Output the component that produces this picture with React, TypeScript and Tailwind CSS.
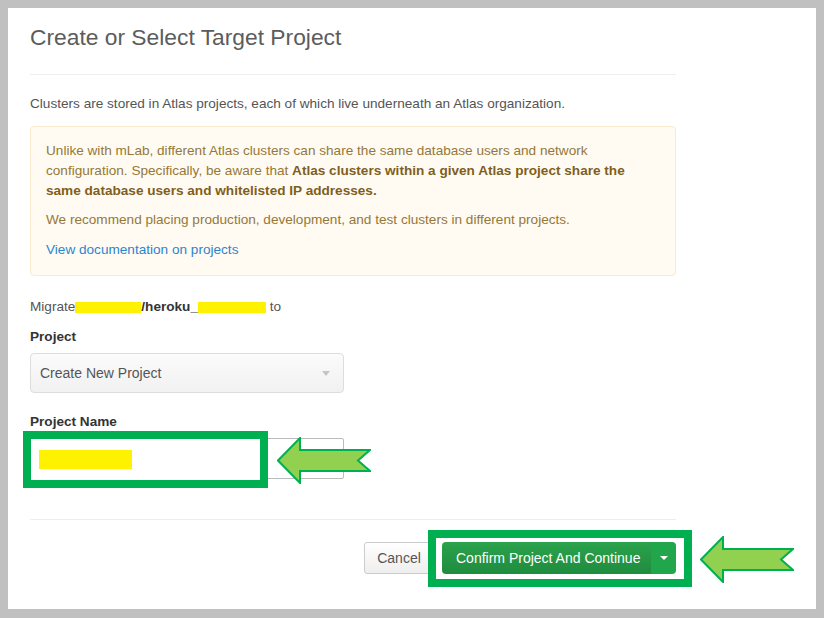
import React from 'react';

const font = { fontFamily: '"Liberation Sans", Arial, Helvetica, sans-serif' };

// green callout arrow pointing left (annotation)
function Arrow({ className }: { className: string }) {
  return (
    <svg className={className} width="94" height="47" viewBox="-1 -1 94 47">
      <path
        d="M0 22.5 L22 0 L22 12 L92 12 L80 22.5 L92 33 L22 33 L22 45 Z"
        fill="#92d050"
        stroke="#00b050"
        strokeWidth="2"
        strokeLinejoin="miter"
      />
    </svg>
  );
}

function Redact({ w, h = 11 }: { w: number; h?: number }) {
  return <span className="inline-block bg-[#fff200] align-middle" style={{ width: w, height: h }} />;
}

export default function App() {
  return (
    <div className="w-[824px] h-[618px] bg-[#c0c0c0] pt-2 px-2 pb-[9px]" style={font}>
      <div className="h-full bg-white pt-[14px] pl-[22px]">
        <div className="relative w-[646px]">
          {/* Header */}
          <h1 className="text-[22.8px] leading-[30px] text-[#5c5c5c] font-normal">Create or Select Target Project</h1>
          <div className="mt-[22px] border-t border-[#eeeeee]" />

          <p className="mt-[19px] text-[13.6px] leading-[20px] text-[#555]">
            Clusters are stored in Atlas projects, each of which live underneath an Atlas organization.
          </p>

          {/* Warning box */}
          <div className="mt-[12px] h-[150px] rounded-[4px] border border-[#faebcc] bg-[#fffbf3] pl-[15px] pt-[14px] text-[13.6px] leading-[20px] text-[#957838]">
            <p className="whitespace-nowrap">
              Unlike with mLab, different Atlas clusters can share the same database users and network
              <br />
              configuration. Specifically, be aware that{' '}
              <b className="text-[#7f5f1d]">Atlas clusters within a given Atlas project share the</b>
              <br />
              <b className="text-[#7f5f1d]">same database users and whitelisted IP addresses.</b>
            </p>
            <p className="mt-[9px]">We recommend placing production, development, and test clusters in different projects.</p>
            <p className="mt-[10px] text-[#2b85cf]">View documentation on projects</p>
          </div>

          {/* Form */}
          <p className="mt-[21px] text-[13.6px] leading-[20px] text-[#555]">
            Migrate
            <Redact w={66} />
            <b className="text-[#333]">/heroku_</b>
            <Redact w={68} /> to
          </p>

          <label className="block mt-[10px] text-[13.6px] leading-[20px] font-bold text-[#333]">Project</label>
          <div className="mt-[6px] w-[314px] h-[40px] rounded-[4px] border border-[#dddddd] bg-gradient-to-b from-[#fbfbfb] to-[#f1f1f1] flex items-center justify-between pl-[9px] pr-[13px]">
            <span className="text-[14px] text-[#555]">Create New Project</span>
            <span className="w-0 h-0 border-l-[4px] border-r-[4px] border-t-[5px] border-l-transparent border-r-transparent border-t-[#c4c4c4]" />
          </div>

          <label className="block mt-[19px] text-[13.6px] leading-[20px] font-bold text-[#333]">Project Name</label>
          <div className="relative mt-[6px] w-[314px] h-[41px] rounded-[2px] border border-[#bbbbbb] bg-white">
            <div className="absolute -left-[8px] -top-[8px] w-[245px] h-[57px] border-[8px] border-[#00b050] bg-white flex items-center pl-[8px]">
              <Redact w={93} h={19} />
            </div>
            <Arrow className="absolute left-[246px] -top-[2px]" />
          </div>

          <div className="mt-[40px] border-t border-[#eeeeee]" />

          {/* Footer buttons */}
          <div className="mt-[22px] flex justify-end gap-[8px]">
            <button className="h-[32px] w-[70px] rounded-[3px] border border-[#cccccc] bg-gradient-to-b from-white to-[#eeeeee] text-[14px] text-[#555]">
              Cancel
            </button>
            <div className="relative flex h-[32px]">
              <div className="absolute -left-[14px] -right-[16px] -top-[12px] -bottom-[13px] border-[8px] border-[#00b050] bg-white" />
              <button className="relative w-[209px] h-[32px] rounded-l-[4px] bg-gradient-to-b from-[#2ba24c] to-[#1f8c3e] text-[14px] text-white text-left pl-[14px]">
                Confirm Project And Continue
              </button>
              <button className="relative w-[25px] h-[32px] rounded-r-[4px] bg-[#22a64c] flex items-center justify-center">
                <span className="w-0 h-0 border-l-[4px] border-r-[4px] border-t-[4px] border-l-transparent border-r-transparent border-t-white" />
              </button>
              <Arrow className="absolute left-[258px] -top-[6px]" />
            </div>
          </div>
        </div>
      </div>
    </div>
  );
}
